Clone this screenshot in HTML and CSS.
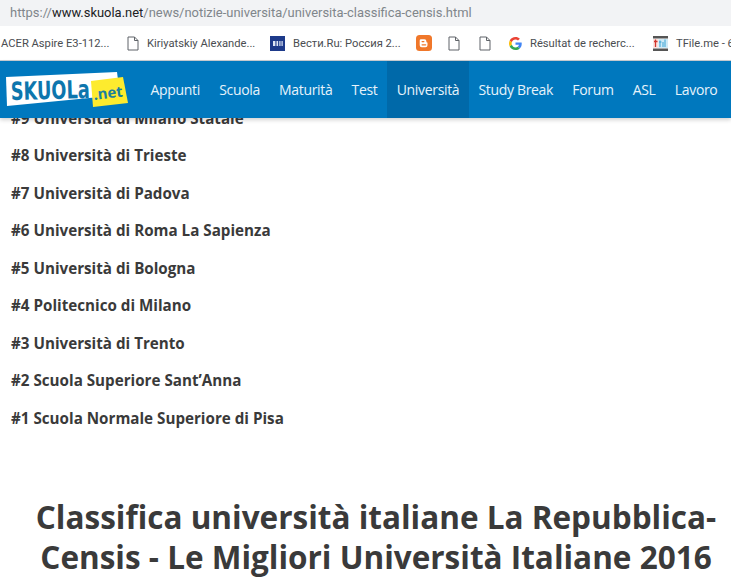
FILE: index.html
```
<!DOCTYPE html>
<html lang="it">
<head>
<meta charset="utf-8">
<title>Classifica università italiane</title>
<link rel="stylesheet" href="styles.css">
</head>
<body>
<div class="address"><span class="dim">https://</span><span class="host">www.skuola.net</span><span class="dim">/news/notizie-universita/universita-classifica-censis.html</span></div>
<div class="bookmarks">
  <div class="bm bm-acer"><span>ACER Aspire E3-112...</span></div>
  <div class="bm bm-kir"><svg class="ic" width="12" height="15" viewBox="0 0 12 15"><path d="M1 1h6.5L11 4.5V14H1z M7.5 1v3.5H11" fill="#fff" stroke="#5f6368" stroke-width="1"/></svg><span>Kiriyatskiy Alexande...</span></div>
  <div class="bm bm-vesti"><svg class="ic" width="15" height="15" viewBox="0 0 15 15"><rect width="15" height="15" fill="#1d3a8a"/><rect x="3" y="5" width="2.4" height="5" fill="#dfe6f5"/><rect x="6.5" y="5" width="1.6" height="5" fill="#dfe6f5"/><rect x="9.3" y="5" width="1.2" height="5" fill="#dfe6f5"/><rect x="11.5" y="5" width="1.2" height="5" fill="#dfe6f5"/></svg><span>Вести.Ru: Россия 2...</span></div>
  <div class="bm bm-blogger"><svg width="16" height="16" viewBox="0 0 16 16"><rect width="16" height="16" rx="3.5" fill="#f0772a"/><path d="M5 4.2h3.4a2 2 0 0 1 2 2v1.1h.4a.7.7 0 0 1 .7.7v2.2a2 2 0 0 1-2 2H5.7a2 2 0 0 1-2-2V5.5A1.3 1.3 0 0 1 5 4.2z" fill="#fff"/><rect x="5.5" y="6" width="3" height="1.2" rx=".6" fill="#f0772a"/><rect x="5.5" y="9.2" width="4.8" height="1.2" rx=".6" fill="#f0772a"/></svg></div>
  <div class="bm bm-doc1"><svg width="12" height="15" viewBox="0 0 12 15"><path d="M1 1h6.5L11 4.5V14H1z M7.5 1v3.5H11" fill="#fff" stroke="#5f6368" stroke-width="1"/></svg></div>
  <div class="bm bm-doc2"><svg width="12" height="15" viewBox="0 0 12 15"><path d="M1 1h6.5L11 4.5V14H1z M7.5 1v3.5H11" fill="#fff" stroke="#5f6368" stroke-width="1"/></svg></div>
  <div class="bm bm-google"><svg class="ic" width="13" height="13" viewBox="0 0 48 48"><path fill="#ea4335" d="M24 9.5c3.500 0 6.700 1.200 9.200 3.600l6.900-6.900C35.900 2.400 30.500 0 24 0 14.600 0 6.500 5.400 2.600 13.200l8 6.200C12.400 13.700 17.700 9.500 24 9.500z"/><path fill="#4285f4" d="M47 24.500c0-1.600-.1-3.100-.4-4.500H24v9h12.900c-.6 3-2.200 5.500-4.800 7.200l7.700 6C44.300 37.900 47 31.800 47 24.500z"/><path fill="#fbbc05" d="M10.600 28.600c-.5-1.400-.8-3-.8-4.600s.3-3.200.8-4.600l-8-6.200C.9 16.500 0 20.100 0 24s.9 7.500 2.600 10.800l8-6.200z"/><path fill="#34a853" d="M24 48c6.500 0 11.900-2.100 15.800-5.800l-7.700-6c-2.100 1.400-4.900 2.300-8.100 2.300-6.300 0-11.600-4.200-13.400-9.900l-8 6.200C6.500 42.600 14.600 48 24 48z"/></svg><span>Résultat de recherc...</span></div>
  <div class="bm bm-tfile"><svg class="ic" width="15" height="15" viewBox="0 0 15 15"><rect width="15" height="15" fill="#fff"/><rect width="15" height="2.500" fill="#555"/><rect y="12.500" width="15" height="2.500" fill="#555"/><rect x="0" y="3" width="5.500" height="9" fill="#fbe3df"/><rect x="5.500" y="3" width="9.500" height="9" fill="#cfeaf6"/><path d="M2.500 3.500v7.500M1 5.500h3.500" stroke="#d0342c" stroke-width="1.300" fill="none"/><path d="M7 11V4.500M6 6h2.500M10 6v5M12 3.500V11" stroke="#3aa3d4" stroke-width="1" fill="none"/></svg><span>TFile.me - 6</span></div>
</div>
<header class="topbar">
  <svg class="logo" width="124" height="45" viewBox="0 0 124 45">
    <polygon points="0,10 111,5 114,28 1,39" fill="#fff"/>
    <text x="5" y="33" class="logo-main" textLength="79" lengthAdjust="spacingAndGlyphs" transform="rotate(-1.500 5 33)">SKUOLa</text>
    <polygon points="85,14 117,10 122,36 87,40" fill="#fdeb2e"/>
    <text x="88" y="33" class="logo-net" transform="rotate(-7 88 33)">.net</text>
  </svg>
  <nav class="nav">
    <a class="nav-item">Appunti</a>
    <a class="nav-item">Scuola</a>
    <a class="nav-item">Maturità</a>
    <a class="nav-item">Test</a>
    <a class="nav-item active">Università</a>
    <a class="nav-item">Study Break</a>
    <a class="nav-item">Forum</a>
    <a class="nav-item">ASL</a>
    <a class="nav-item">Lavoro</a>
  </nav>
</header>
<main class="content">
  <ul class="rank">
    <li>#9 Università di Milano Statale</li>
    <li>#8 Università di Trieste</li>
    <li>#7 Università di Padova</li>
    <li>#6 Università di Roma La Sapienza</li>
    <li>#5 Università di Bologna</li>
    <li>#4 Politecnico di Milano</li>
    <li>#3 Università di Trento</li>
    <li>#2 Scuola Superiore Sant’Anna</li>
    <li>#1 Scuola Normale Superiore di Pisa</li>
  </ul>
  <h1 class="title">Classifica università italiane La Repubblica-<br>Censis - Le Migliori Università Italiane 2016</h1>
</main>
</body>
</html>
```
FILE: styles.css
```
html, body {
  margin: 0;
  padding: 0;
  height: 580px;
  overflow: hidden;
  background: #fff;
}
body {
  font-family: "Open Sans", sans-serif;
  color: #3a3a3a;
}
.address {
  height: 26px;
  background: #f2f3f5;
  padding-left: 10px;
  font-family: "Roboto", sans-serif;
  font-size: 12.950px;
  line-height: 26px;
  white-space: nowrap;
}
.dim { color: #80868b; }
.host { color: #202124; }
.bookmarks {
  height: 34px;
  background: #fff;
  display: flex;
  align-items: center;
  font-family: "Roboto", sans-serif;
  font-size: 11.200px;
  color: #4a4d51;
  white-space: nowrap;
  overflow: hidden;
  border-bottom: 1px solid #c9ced3;
}
.bm {
  display: flex;
  align-items: center;
  gap: 8px;
  flex: none;
}
.bm-acer { width: 126px; padding-left: 1px; }
.bm-kir { width: 143px; }
.bm-vesti { width: 146px; }
.bm-blogger { width: 32px; }
.bm-doc1 { width: 31px; }
.bm-doc2 { width: 30px; }
.bm-google { width: 144px; }
.topbar {
  position: relative;
  z-index: 2;
  height: 57px;
  background: #0078be;
  display: flex;
  align-items: stretch;
  box-shadow: 0 2px 4px rgba(0, 0, 0, 0.18);
}
.logo {
  flex: none;
  margin: 6px 0 0 6px;
}
.logo-main {
  font-family: "DejaVu Sans", sans-serif;
  font-weight: 700;
  font-size: 25px;
  fill: #0d76ad;
}
.logo-net {
  font-family: "Open Sans", sans-serif;
  font-weight: 700;
  font-size: 15px;
  fill: #1a7f9e;
}
.nav {
  display: flex;
  margin-left: 11px;
}
.nav-item {
  display: flex;
  align-items: center;
  padding: 0 9.600px;
  font-size: 14px;
  letter-spacing: -0.33px;
  color: #e6f3fb;
  white-space: nowrap;
}
.nav-item.active {
  background: #0069a9;
}
.content {
  overflow: hidden;
  height: 462px;
}
.rank {
  list-style: none;
  margin: -10.500px 0 0;
  padding: 0 0 0 11px;
  font-size: 15.200px;
  font-weight: 700;
  line-height: 20px;
  color: #3a3a3a;
}
.rank li {
  margin-bottom: 17.500px;
}
.title {
  margin: 69.500px 0 0;
  padding-left: 21px;
  font-size: 31.500px;
  font-weight: 700;
  line-height: 40px;
  text-align: center;
  color: #3a3a3a;
  white-space: nowrap;
}
```
